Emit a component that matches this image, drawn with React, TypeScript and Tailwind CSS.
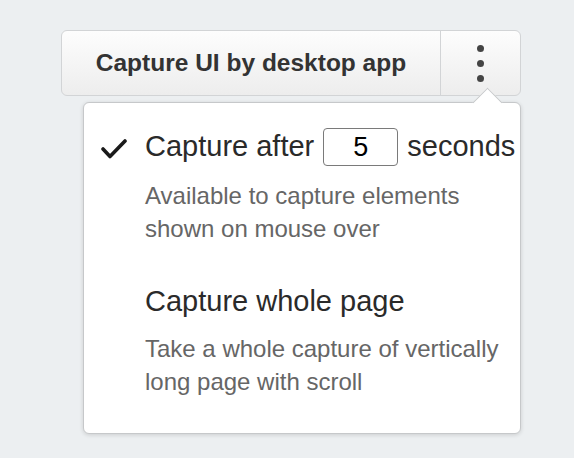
import React, { useState } from "react";

// Split button with an options popover for the capture tool
const CheckIcon = () => (
    <svg width="26" height="22" viewBox="0 0 26 22" className="shrink-0">
        <polyline
            points="2,11 9,18.5 24,3"
            fill="none"
            stroke="#1a1a1a"
            strokeWidth="3.6"
            strokeLinecap="round"
            strokeLinejoin="round"
        />
    </svg>
);

const App = () => {
    const [delay, setDelay] = useState("5");

    return (
        <div
            className="min-h-screen w-full bg-[#eceff1] pt-[30px] pl-[61px]"
            style={{ fontFamily: '"Liberation Sans", Arial, sans-serif' }}
        >
            {/* button group */}
            <div className="flex h-[66px] w-[460px] rounded-[6px] border border-[#d2d4d6] bg-gradient-to-b from-[#fdfdfd] to-[#ededed]">
                <button className="flex w-[379px] items-center justify-center border-r border-[#d2d4d6] text-[24.5px] font-bold text-[#333]">
                    Capture UI by desktop app
                </button>
                <button className="flex flex-1 flex-col items-center justify-center gap-[8px]">
                    <span className="h-[7px] w-[7px] rounded-full bg-[#444]" />
                    <span className="h-[7px] w-[7px] rounded-full bg-[#444]" />
                    <span className="h-[7px] w-[7px] rounded-full bg-[#444]" />
                </button>
            </div>

            {/* popover menu */}
            <div className="relative ml-[22px] mt-[6px] w-[438px] rounded-[6px] border border-[#c6c8ca] bg-white pb-[35px] pt-[25px] shadow-[0_1px_4px_rgba(0,0,0,0.14)]">
                <div className="absolute left-[393px] top-[-11px] h-[21px] w-[21px] rotate-45 border-l border-t border-[#c6c8ca] bg-white" />

                <div className="flex items-start">
                    <div className="flex w-[61px] justify-end pr-[18px] pt-[10px]">
                        <CheckIcon />
                    </div>
                    <div className="flex flex-col">
                        <div className="flex h-[38px] items-center text-[29px] text-[#2a2a2a]">
                            <span>Capture after</span>
                            <input
                                value={delay}
                                onChange={(e) => setDelay(e.target.value)}
                                className="mx-[9px] h-[38px] w-[75px] rounded-[4px] border border-[#7a7a7a] text-center text-[27px] text-black outline-none"
                                style={{ fontFamily: '"Liberation Sans", Arial, sans-serif' }}
                            />
                            <span>seconds</span>
                        </div>
                        <p className="mt-[13px] text-[24px] leading-[33px] text-[#666]">
                            <span className="block">Available to capture elements</span>
                            <span className="block">shown on mouse over</span>
                        </p>
                    </div>
                </div>

                <div className="mt-[40px] flex flex-col pl-[61px]">
                    <div className="text-[29px] leading-[32px] text-[#2a2a2a]">Capture whole page</div>
                    <p className="mt-[15px] text-[24px] leading-[33px] text-[#666]">
                        <span className="block">Take a whole capture of vertically</span>
                        <span className="block">long page with scroll</span>
                    </p>
                </div>
            </div>
        </div>
    );
};

export default App;
